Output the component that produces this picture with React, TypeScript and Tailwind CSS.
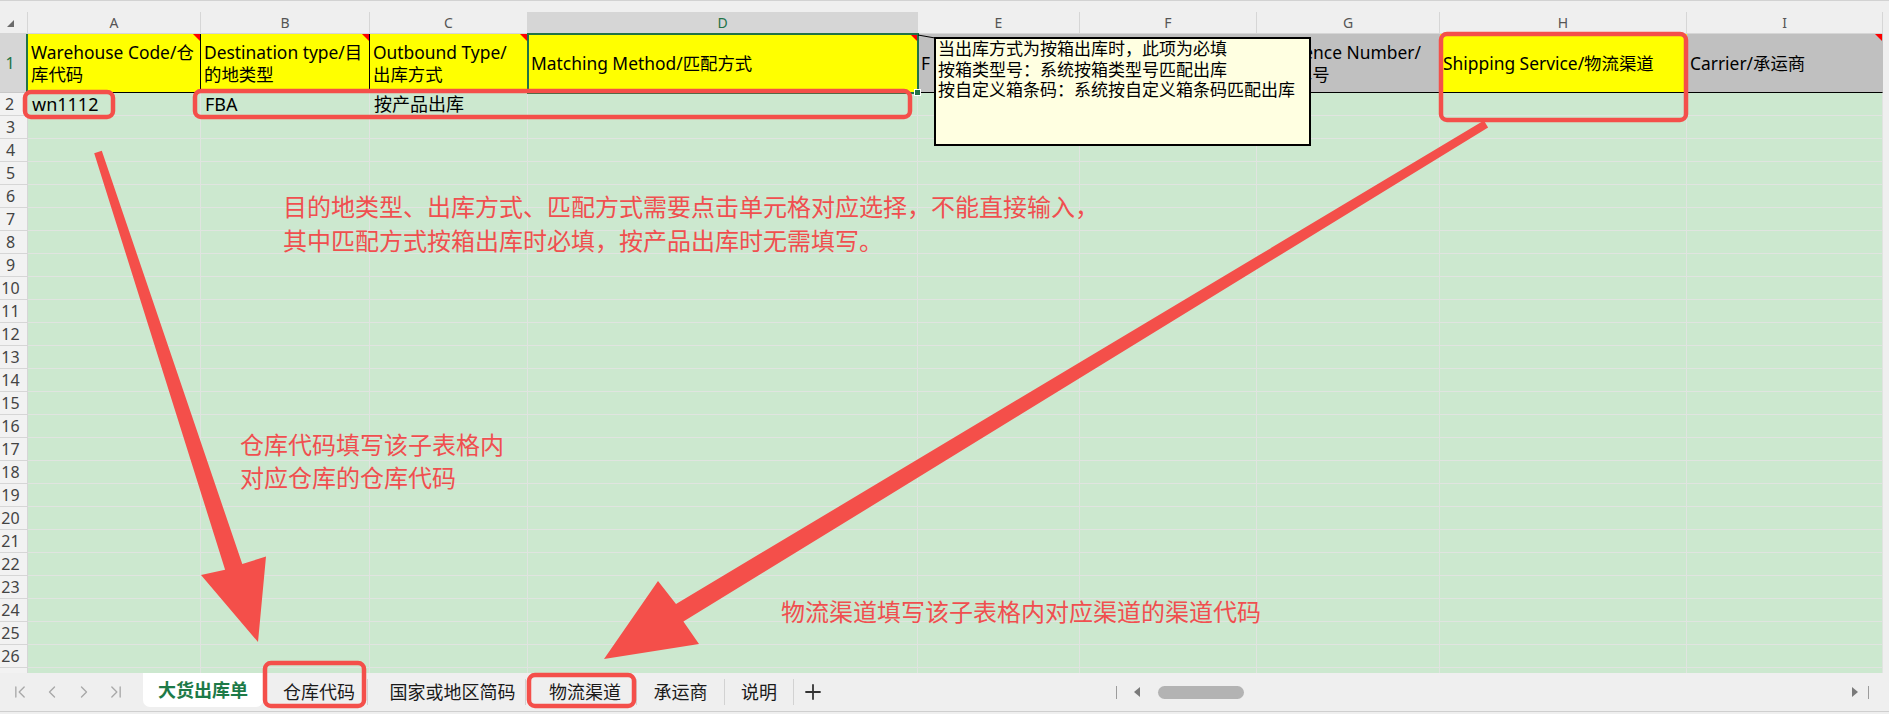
import React from 'react';
import { ChevronFirst, ChevronLast, ChevronLeft, ChevronRight, Plus } from 'lucide-react';

// column widths in px, index 0..8 = A..I
const cols = [
  { w: 'w-[173px]', l: 'A' },
  { w: 'w-[169px]', l: 'B' },
  { w: 'w-[158px]', l: 'C' },
  { w: 'w-[390px]', l: 'D' },
  { w: 'w-[162px]', l: 'E' },
  { w: 'w-[177px]', l: 'F' },
  { w: 'w-[183px]', l: 'G' },
  { w: 'w-[247px]', l: 'H' },
  { w: 'w-[196px]', l: 'I' },
];

type HeadCell = { bg: string; lines: string[]; tri?: boolean; edge: string };

// E1..G1 sit under the comment box, only their edges show
const row1: HeadCell[] = [
  { bg: 'bg-[#ffff00]', lines: ['Warehouse Code/仓', '库代码'], tri: true, edge: 'border-r-black' },
  { bg: 'bg-[#ffff00]', lines: ['Destination type/目', '的地类型'], tri: true, edge: 'border-r-black' },
  { bg: 'bg-[#ffff00]', lines: ['Outbound Type/', '出库方式'], tri: true, edge: 'border-r-black' },
  { bg: 'bg-[#ffff00]', lines: ['Matching Method/匹配方式'], tri: true, edge: 'border-r-[#ffff00]' },
  { bg: 'bg-[#c0c0c0]', lines: ['F'], edge: 'border-r-[#c0c0c0]' },
  { bg: 'bg-[#c0c0c0]', lines: [], edge: 'border-r-[#c0c0c0]' },
  { bg: 'bg-[#c0c0c0]', lines: ['Reference Number/', '参考单号'], edge: 'border-r-[#c0c0c0]' },
  { bg: 'bg-[#ffff00]', lines: ['Shipping Service/物流渠道'], edge: 'border-r-[#ffff00]' },
  { bg: 'bg-[#c0c0c0]', lines: ['Carrier/承运商'], tri: true, edge: 'border-r-[#c0c0c0]' },
];

const row2 = ['wn1112', 'FBA', '按产品出库', '', '', '', '', '', ''];

const blankRows = Array.from({ length: 25 }, (_, i) => i + 3);

const tabs = [
  { name: '仓库代码', w: 'w-[104px] pl-[8px]' },
  { name: '国家或地区简码', w: 'w-[157px] pl-[12px]' },
  { name: '物流渠道', w: 'w-[110px] pl-[8px]' },
  { name: '承运商', w: 'w-[87px]' },
  { name: '说明', w: 'w-[68px]' },
];

function Triangle() {
  return (
    <span className="absolute top-0 right-0 w-0 h-0 border-t-[7px] border-l-[7px] border-t-[#ff0000] border-l-transparent" />
  );
}

function Sheet() {
  return (
    <div className="w-[1883px] h-[661px] overflow-hidden">
      {/* column letters */}
      <div className="flex h-[22px] border-b border-[#d6d6d6]">
        <div className="w-[28px] shrink-0 flex items-end justify-start pl-[7px] pb-[6px] border-r border-[#d6d6d6]">
          <span className="w-0 h-0 border-b-[7px] border-l-[7px] border-b-[#6b6b6b] border-l-transparent" />
        </div>
        {cols.map((c) => (
          <div
            key={c.l}
            className={`${c.w} shrink-0 flex items-center justify-center text-[14px] border-r border-[#d6d6d6] ${
              c.l === 'D' ? 'bg-[#d6d6d6] text-[#217346]' : 'text-[#555555]'
            }`}
          >
            {c.l}
          </div>
        ))}
      </div>

      {/* row 1 : headers */}
      <div className="flex h-[59px]">
        <div className="w-[28px] shrink-0 flex items-center justify-center pr-[6px] bg-[#d6d6d6] text-[#217346] text-[16px] border-r-2 border-[#217346] border-b border-b-[#c8c8c8]">
          1
        </div>
        {row1.map((c, i) => (
          <div
            key={i}
            className={`${cols[i].w} ${c.bg} ${c.edge} shrink-0 relative flex flex-col justify-center pl-[3px] border-r border-b border-b-black text-[17.4px] leading-[22px] text-black whitespace-nowrap overflow-hidden`}
          >
            {c.lines.map((t) => (
              <span key={t}>{t}</span>
            ))}
            {c.tri && <Triangle />}
          </div>
        ))}
      </div>

      {/* row 2 */}
      <div className="flex h-[23px]">
        <div className="w-[28px] shrink-0 flex items-center justify-center pr-[8px] bg-[#f2f2f2] text-[#444444] text-[16px] border-r border-b border-[#d6d6d6]">
          2
        </div>
        {row2.map((t, i) => (
          <div
            key={i}
            className={`${cols[i].w} shrink-0 flex items-center pl-[4px] bg-[#cce8cf] border-r border-b border-[#e0e4e0] text-[18px] text-black whitespace-nowrap`}
          >
            {t}
          </div>
        ))}
      </div>

      {/* empty rows, the last one is only a sliver */}
      {blankRows.map((n) => (
        <div key={n} className="flex h-[23px]">
          <div className="w-[28px] shrink-0 flex items-center justify-center pr-[6px] bg-[#f2f2f2] text-[#444444] text-[16px] border-r border-b border-[#d6d6d6]">
            {n < 27 ? n : ''}
          </div>
          {cols.map((c) => (
            <div key={c.l} className={`${c.w} shrink-0 bg-[#cce8cf] border-r border-b border-[#e0e4e0]`} />
          ))}
        </div>
      ))}
    </div>
  );
}

function TabBar() {
  return (
    <div className="h-[39px] flex border-b border-[#cfcfcf] bg-[#efefef]">
      <div className="w-[143px] shrink-0 flex items-center pl-[4px] text-[#a8a8a8]">
        <span className="w-[32px] flex justify-center"><ChevronFirst size={20} strokeWidth={1.6} /></span>
        <span className="w-[32px] flex justify-center"><ChevronLeft size={20} strokeWidth={1.6} /></span>
        <span className="w-[32px] flex justify-center"><ChevronRight size={20} strokeWidth={1.6} /></span>
        <span className="w-[32px] flex justify-center"><ChevronLast size={20} strokeWidth={1.6} /></span>
      </div>
      <div className="w-[120px] h-[34px] shrink-0 bg-white rounded-b-[7px] flex items-center justify-center text-[18px] font-bold text-[#1d7a48]">
        大货出库单
      </div>
      {tabs.map((t) => (
        <div key={t.name} className="flex items-center">
          <div className={`${t.w} h-full flex items-center justify-center text-[18px] text-[#1a1a1a]`}>{t.name}</div>
          <span className="w-px h-[26px] bg-[#d2d2d2]" />
        </div>
      ))}
      <div className="w-[38px] flex items-center justify-center text-[#333333]">
        <Plus size={24} strokeWidth={1.8} />
      </div>
      <div className="flex-1" />
      <div className="w-[773px] shrink-0 flex items-center">
        <span className="w-px h-[13px] bg-[#9c9c9c]" />
        <span className="ml-[17px] w-0 h-0 border-y-[5px] border-r-[6px] border-y-transparent border-r-[#7a7a7a]" />
        <span className="ml-[18px] w-[86px] h-[13px] rounded-full bg-[#b3b3b3]" />
        <span className="flex-1" />
        <span className="w-0 h-0 border-y-[5px] border-l-[6px] border-y-transparent border-l-[#7a7a7a]" />
        <span className="ml-[10px] w-px h-[13px] bg-[#9c9c9c]" />
        <span className="w-[20px]" />
      </div>
    </div>
  );
}

function Overlay() {
  const red = '#f44f4a';
  return (
    <svg className="absolute inset-0 pointer-events-none" width={1889} height={714}>
      {/* comment connector */}
      <line x1={918} y1={35} x2={935} y2={38} stroke="#000" strokeWidth={1} />
      {/* highlight boxes */}
      <rect x={25} y={92} width={88} height={25} rx={6} fill="none" stroke={red} strokeWidth={4.5} />
      <rect x={195} y={91} width={715} height={26} rx={6} fill="none" stroke={red} strokeWidth={4.5} />
      <rect x={1441} y={34} width={245} height={86} rx={6} fill="none" stroke={red} strokeWidth={4.5} />
      <rect x={265} y={663} width={99} height={43} rx={6} fill="none" stroke={red} strokeWidth={4.5} />
      <rect x={529} y={675} width={105} height={31} rx={6} fill="none" stroke={red} strokeWidth={4.5} />
      {/* arrow to 仓库代码 tab */}
      <polygon
        fill={red}
        points="94.2,153.2 101.8,150.8 242.3,564.1 266,556.4 258,642 201,575 225.1,569.7"
      />
      {/* arrow to 物流渠道 tab */}
      <polygon
        fill={red}
        points="1483.9,120.6 676,604 658,581 604,659 699,644 683.4,621.6 1488.1,127.4"
      />
    </svg>
  );
}

export default function App() {
  return (
    <div className="relative w-[1889px] h-[714px] overflow-hidden bg-[#efefef] font-['Noto_Sans','Noto_Sans_CJK_SC',sans-serif]">
      <div className="h-[12px] border-t border-[#d2d2d2]" />
      <div className="flex">
        <Sheet />
        <div className="w-[6px] bg-[#efefef]" />
      </div>
      <TabBar />

      {/* selected cell D1 */}
      <div className="absolute left-[527px] top-[33px] w-[392px] h-[61px] border-2 border-[#217346]" />
      <div className="absolute left-[914px] top-[89px] w-[7px] h-[7px] bg-[#217346] border border-white" />

      {/* cell comment */}
      <div className="absolute left-[934px] top-[37px] w-[377px] h-[109px] bg-[#ffffe1] border-2 border-black pl-[2px] text-[17px] leading-[20.5px] text-black whitespace-nowrap">
        <div>当出库方式为按箱出库时，此项为必填</div>
        <div>按箱类型号：系统按箱类型号匹配出库</div>
        <div>按自定义箱条码：系统按自定义箱条码匹配出库</div>
      </div>

      {/* annotations */}
      <div className="absolute left-[283px] top-[190px] text-[24px] leading-[34px] text-[#f04f4f] whitespace-nowrap">
        <div>目的地类型、出库方式、匹配方式需要点击单元格对应选择，不能直接输入，</div>
        <div>其中匹配方式按箱出库时必填，按产品出库时无需填写。</div>
      </div>
      <div className="absolute left-[240px] top-[428px] text-[24px] leading-[33px] text-[#f04f4f] whitespace-nowrap">
        <div>仓库代码填写该子表格内</div>
        <div>对应仓库的仓库代码</div>
      </div>
      <div className="absolute left-[781px] top-[595px] text-[24px] leading-[34px] text-[#f04f4f] whitespace-nowrap">
        物流渠道填写该子表格内对应渠道的渠道代码
      </div>

      <Overlay />
    </div>
  );
}
